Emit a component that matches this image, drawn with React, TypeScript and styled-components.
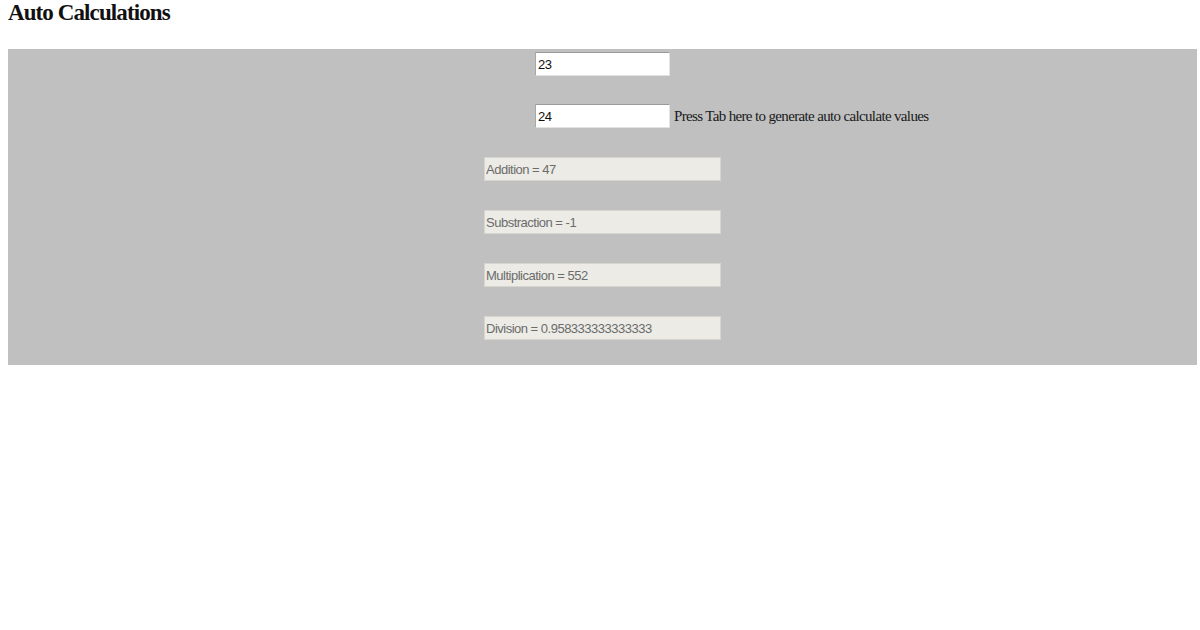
import React from 'react';
import { createGlobalStyle, styled } from 'styled-components';

const GlobalStyle = createGlobalStyle`
  body {
    margin: 0 3px 0 8px;
    background: #ffffff;
    font-family: 'Liberation Serif', 'Times New Roman', serif;
  }
`;

const RESULTS = [
  'Addition = 47',
  'Substraction = -1',
  'Multiplication = 552',
  'Division = 0.958333333333333',
];

function App() {
  return (
    <>
      <GlobalStyle />
      <Title>Auto Calculations</Title>
      <Panel>
        <InputRow>
          <span />
          <NumberInput type='text' defaultValue='23' />
          <span />
        </InputRow>
        <InputRow>
          <span />
          <NumberInput type='text' defaultValue='24' />
          <Hint>Press Tab here to generate auto calculate values</Hint>
        </InputRow>
        {RESULTS.map(result => (
          <ResultBox key={result} type='text' readOnly value={result} />
        ))}
      </Panel>
    </>
  );
}

export default App;

const Title = styled.h2`
  margin: 0 0 24px 0;
  padding-top: 1px;
  font-size: 23px;
  line-height: 24px;
  font-weight: bold;
  letter-spacing: -0.9px;
  color: #111;
`;

const Panel = styled.div`
  background-color: #c0c0c0;
  display: flex;
  flex-direction: column;
  align-items: center;
  gap: 29px;
  padding: 3px 0 25px 0;
`;

const InputRow = styled.div`
  width: 100%;
  display: grid;
  grid-template-columns: 1fr 135px 1fr;
  align-items: center;

  &:first-child {
    margin-bottom: -1px;
  }
`;

const NumberInput = styled.input`
  box-sizing: border-box;
  width: 135px;
  height: 24px;
  padding: 0 2px;
  background: #ffffff;
  border: 1px solid #e2e2e2;
  border-top-color: #9a9a9a;
  border-left-color: #a8a8a8;
  font-family: 'Liberation Sans', Arial, sans-serif;
  font-size: 13px;
  letter-spacing: -0.4px;
  color: #111;
  outline: none;
`;

const Hint = styled.span`
  padding-left: 4px;
  font-size: 15px;
  letter-spacing: -0.65px;
  color: #1a1a1a;
  white-space: nowrap;
`;

const ResultBox = styled.input`
  box-sizing: border-box;
  width: 237px;
  height: 24px;
  padding: 0 1px;
  background: #ecebe6;
  border: 1px solid #d6d5d0;
  font-family: 'Liberation Sans', Arial, sans-serif;
  font-size: 13px;
  letter-spacing: -0.5px;
  color: #6b6b6b;
  outline: none;
`;
